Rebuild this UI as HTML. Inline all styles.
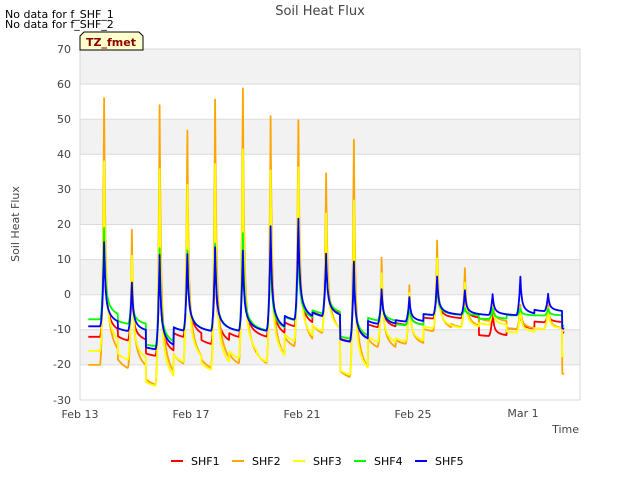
<!DOCTYPE html>
<html><head><meta charset="utf-8"><style>
html,body{margin:0;padding:0;background:#fff;}
svg{display:block;font-family:"DejaVu Sans","Liberation Sans",sans-serif;}
</style></head><body>
<svg id="s" width="640" height="480" xmlns="http://www.w3.org/2000/svg">
<rect x="80" y="49" width="500" height="351" fill="#fff"/>
<g fill="#f2f2f2">
<rect x="80" y="49" width="500" height="35.1"/>
<rect x="80" y="119.2" width="500" height="35.1"/>
<rect x="80" y="189.4" width="500" height="35.1"/>
<rect x="80" y="259.6" width="500" height="35.1"/>
<rect x="80" y="329.8" width="500" height="35.1"/>
</g>
<g stroke="#dcdcdc" stroke-width="1">
<line x1="80" x2="580" y1="84.1" y2="84.1"/><line x1="80" x2="580" y1="119.2" y2="119.2"/>
<line x1="80" x2="580" y1="154.3" y2="154.3"/><line x1="80" x2="580" y1="189.4" y2="189.4"/>
<line x1="80" x2="580" y1="224.5" y2="224.5"/><line x1="80" x2="580" y1="259.6" y2="259.6"/>
<line x1="80" x2="580" y1="294.7" y2="294.7"/><line x1="80" x2="580" y1="329.8" y2="329.8"/>
<line x1="80" x2="580" y1="364.9" y2="364.9"/>
</g>
<rect x="80" y="49" width="500" height="351" fill="none" stroke="#d8d8d8"/>
<g id="lines" fill="none" stroke-width="1.8" stroke-linejoin="round"></g>
<g font-size="11" fill="#444" text-anchor="end">
<text x="71" y="53">70</text><text x="71" y="88">60</text><text x="71" y="123">50</text>
<text x="71" y="158">40</text><text x="71" y="193">30</text><text x="71" y="228">20</text>
<text x="71" y="263">10</text><text x="71" y="298">0</text><text x="71" y="333">-10</text>
<text x="71" y="368">-20</text><text x="71" y="404">-30</text>
</g>
<g font-size="11" fill="#444" text-anchor="middle">
<text x="80" y="418">Feb 13</text><text x="191" y="418">Feb 17</text><text x="302" y="418">Feb 21</text>
<text x="413" y="418">Feb 25</text><text x="523" y="417">Mar 1</text>
</g>
<text x="579" y="433" font-size="11" fill="#444" text-anchor="end">Time</text>
<text transform="translate(19,224) rotate(-90)" font-size="11" fill="#444" text-anchor="middle">Soil Heat Flux</text>
<text x="320" y="15" font-size="13" fill="#444" text-anchor="middle">Soil Heat Flux</text>
<text x="5" y="18" font-size="11" fill="#000">No data for f_SHF_1</text>
<text x="5" y="28" font-size="11" fill="#000">No data for f_SHF_2</text>
<path d="M84,32 L139,32 L143,36 L143,50 L80,50 L80,36 Z" fill="#ffffcc" stroke="#000" stroke-width="1"/>
<text x="111" y="46" font-size="11" font-weight="bold" fill="#8b0000" text-anchor="middle">TZ_fmet</text>
<g font-size="11" fill="#000">
<line x1="171" x2="183" y1="461" y2="461" stroke="#f00" stroke-width="2"/><text x="191" y="465">SHF1</text>
<line x1="232" x2="244" y1="461" y2="461" stroke="#ffa500" stroke-width="2"/><text x="252" y="465">SHF2</text>
<line x1="293" x2="305" y1="461" y2="461" stroke="#ff0" stroke-width="2"/><text x="313" y="465">SHF3</text>
<line x1="354" x2="366" y1="461" y2="461" stroke="#0f0" stroke-width="2"/><text x="374" y="465">SHF4</text>
<line x1="415" x2="427" y1="461" y2="461" stroke="#00f" stroke-width="2"/><text x="435" y="465">SHF5</text>
</g>
</svg>
<script>
var S=[
["#f00",[24,3,15,18,16,21,19,22,14,10,3,-3,4,0,-5,-5,-5,10],[-12,-14,-18,-13,-15,-13,-13,-10,-7,-14,-10,-9,-7,-7,-12,-10,-8,-11]],
["#ffa500",[56,17,53,45,54,57,49,48,33,43,9,2,15,7,-2,-3,-2,61],[-20,-23,-27,-22,-23,-22,-22,-17,-13,-25,-17,-15,-11,-10,-8,-10,-10,-23]],
["#ff0",[38,10,35,30,36,40,34,35,22,26,5,0,10,3,-3,-4,-4,40],[-16,-20,-27,-21,-23,-20,-21,-15,-12,-24,-15,-14,-10,-10,-9,-11,-10,-18]],
["#0f0",[19,1,13,12,14,17,14,15,10,9,0,-3,3,-4,-4,-4,-4,10],[-7,-9,-15,-11,-11,-11,-11,-8,-6,-13,-8,-9,-6,-6,-7,-6,-6,-9]],
["#00f",[15,3,11,11,13,12,19,21,11,9,1,-1,5,1,0,5,0,11],[-9,-11,-16,-11,-11,-11,-11,-8,-7,-14,-9,-8,-6,-6,-6,-6,-5,-10]]];
var g=document.getElementById('lines'),NS="http://www.w3.org/2000/svg";
function X(d){return 80+d*27.75}function Y(v){return 49+(70-v)*3.51}
S.forEach(function(s){
 var d="",pk=s[1],tr=s[2];
 for(var t=0.3;t<=17.45;t+=0.01){
  var P=0.87,i=Math.round(t-P); if(i<0)i=0; if(i>17)i=17;
  var base=tr[i],v=base;
  for(var k=0;k<18;k++){
   var dt=t-(k+P),A=pk[k]-tr[k];
   if(dt>=0){v+=A*(0.55*Math.exp(-dt/0.035)+0.3*Math.exp(-dt/0.12)+0.15*Math.exp(-dt/0.5));}
   else if(dt>-0.16){var u=(0.16+dt)/0.16;v+=A*Math.pow(u,2.5);}
  }
  d+=(d?"L":"M")+X(t).toFixed(1)+","+Y(v).toFixed(1);
 }
 var e=document.createElementNS(NS,"path");e.setAttribute("d",d);e.setAttribute("stroke",s[0]);g.appendChild(e);
});
</script>
</body></html>
